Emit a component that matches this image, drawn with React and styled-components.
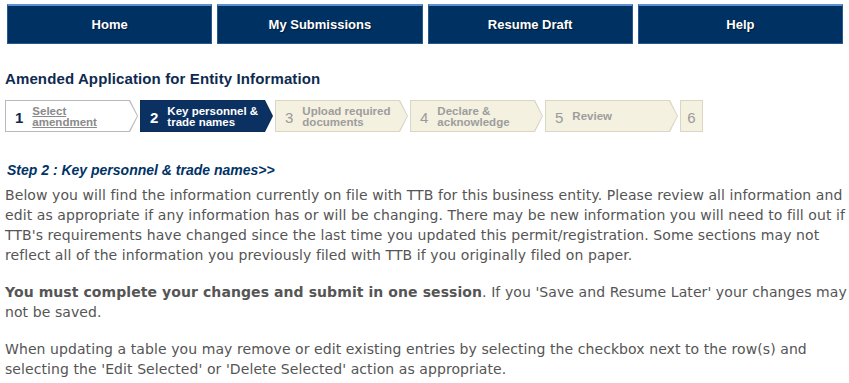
import React from 'react';
import styled, { createGlobalStyle } from 'styled-components';

const GlobalStyle = createGlobalStyle`
  body {
    margin: 0;
    background: #ffffff;
    font-family: "Liberation Sans", Arial, sans-serif;
  }
`

const Page = styled.div`
  padding: 4px 6px 0 5px;
`

const NavBar = styled.nav`
  display: flex;
  gap: 5px;
  padding-left: 2px;
`

const NavButton = styled.a`
  flex: 1;
  height: 40px;
  box-sizing: border-box;
  display: flex;
  align-items: center;
  justify-content: center;
  background-color: #003163;
  border: 1px solid #235a90;
  border-top: 2px solid #5c90cf;
  color: #ffffff;
  font-size: 13px;
  font-weight: bold;
  text-decoration: none;
  text-shadow: 1px 1px 1px #001a38;
`

const PageTitle = styled.h1`
  margin: 26px 0 12px;
  font-size: 15px;
  line-height: 18px;
  letter-spacing: 0.12px;
  font-weight: bold;
  color: #0f2a4f;
`

const StepList = styled.ol`
  display: flex;
  gap: 2px;
  margin: 0;
  padding: 0;
  list-style: none;
`

const chevron = 'polygon(0 0, calc(100% - 8px) 0, 100% 50%, calc(100% - 8px) 100%, 0 100%)'

const palettes = {
  done: { border: '#b9b9b9', fill: '#ffffff', num: '#0f2a4f', label: '#8a8a8a' },
  active: { border: '#0b2d56', fill: '#0a3162', num: '#ffffff', label: '#ffffff' },
  todo: { border: '#d9d6c4', fill: '#f4f1e0', num: '#9a9a9a', label: '#9d9d9d' },
}

const Step = styled.li`
  position: relative;
  width: ${p => (p.$last ? '23px' : '133px')};
  height: 32px;
  box-sizing: border-box;
  display: flex;
  align-items: center;
  gap: 9px;
  padding-left: ${p => (p.$last ? '0' : '10px')};
  padding-top: 2px;
  justify-content: ${p => (p.$last ? 'center' : 'flex-start')};
  background: ${p => palettes[p.$state].border};
  clip-path: ${p => (p.$last ? 'none' : chevron)};

  &::before {
    content: '';
    position: absolute;
    inset: 1px;
    background: ${p => palettes[p.$state].fill};
    clip-path: ${p => (p.$last ? 'none' : chevron)};
  }
`

const StepNumber = styled.span`
  position: relative;
  font-size: 15px;
  font-weight: ${p => (p.$state === 'todo' ? 'normal' : 'bold')};
  color: ${p => palettes[p.$state].num};
`

const StepLabel = styled.span`
  position: relative;
  font-size: 11.5px;
  line-height: 11.5px;
  font-weight: bold;
  color: ${p => palettes[p.$state].label};
  text-decoration: ${p => (p.$state === 'done' ? 'underline' : 'none')};
`

const StepHeading = styled.h2`
  margin: 29px 0 6px 2px;
  font-size: 14px;
  line-height: 18px;
  font-weight: bold;
  font-style: italic;
  color: #003366;
`

const Paragraph = styled.p`
  margin: 0 0 17px;
  font-family: "DejaVu Sans", Verdana, sans-serif;
  font-size: 14px;
  line-height: 20px;
  letter-spacing: 0.08px;
  white-space: nowrap;
  color: #555555;
`

const steps = [
  { n: 1, label: ['Select', 'amendment'], state: 'done' },
  { n: 2, label: ['Key personnel &', 'trade names'], state: 'active' },
  { n: 3, label: ['Upload required', 'documents'], state: 'todo' },
  { n: 4, label: ['Declare &', 'acknowledge'], state: 'todo' },
  { n: 5, label: ['Review'], state: 'todo' },
]

const lines = list =>
  list.map((line, i) => (
    <React.Fragment key={i}>
      {i > 0 && <br />}
      {line}
    </React.Fragment>
  ))

export default function App() {
  return (
    <Page>
      <GlobalStyle />
      <NavBar>
        <NavButton href="#">Home</NavButton>
        <NavButton href="#">My Submissions</NavButton>
        <NavButton href="#">Resume Draft</NavButton>
        <NavButton href="#">Help</NavButton>
      </NavBar>

      <PageTitle>Amended Application for Entity Information</PageTitle>

      <StepList>
        {steps.map(s => (
          <Step key={s.n} $state={s.state}>
            <StepNumber $state={s.state}>{s.n}</StepNumber>
            <StepLabel $state={s.state}>{lines(s.label)}</StepLabel>
          </Step>
        ))}
        <Step $state="todo" $last>
          <StepNumber $state="todo">6</StepNumber>
        </Step>
      </StepList>

      <StepHeading>Step 2 :&nbsp;Key personnel &amp; trade names&gt;&gt;</StepHeading>

      <Paragraph>
        {lines([
          'Below you will find the information currently on file with TTB for this business entity. Please review all information and',
          'edit as appropriate if any information has or will be changing. There may be new information you will need to fill out if',
          "TTB's requirements have changed since the last time you updated this permit/registration. Some sections may not",
          'reflect all of the information you previously filed with TTB if you originally filed on paper.',
        ])}
      </Paragraph>
      <Paragraph>
        <b>You must complete your changes and submit in one session</b>. If you 'Save and Resume Later' your changes may
        <br />
        not be saved.
      </Paragraph>
      <Paragraph>
        {lines([
          'When updating a table you may remove or edit existing entries by selecting the checkbox next to the row(s) and',
          "selecting the 'Edit Selected' or 'Delete Selected' action as appropriate.",
        ])}
      </Paragraph>
    </Page>
  );
}
